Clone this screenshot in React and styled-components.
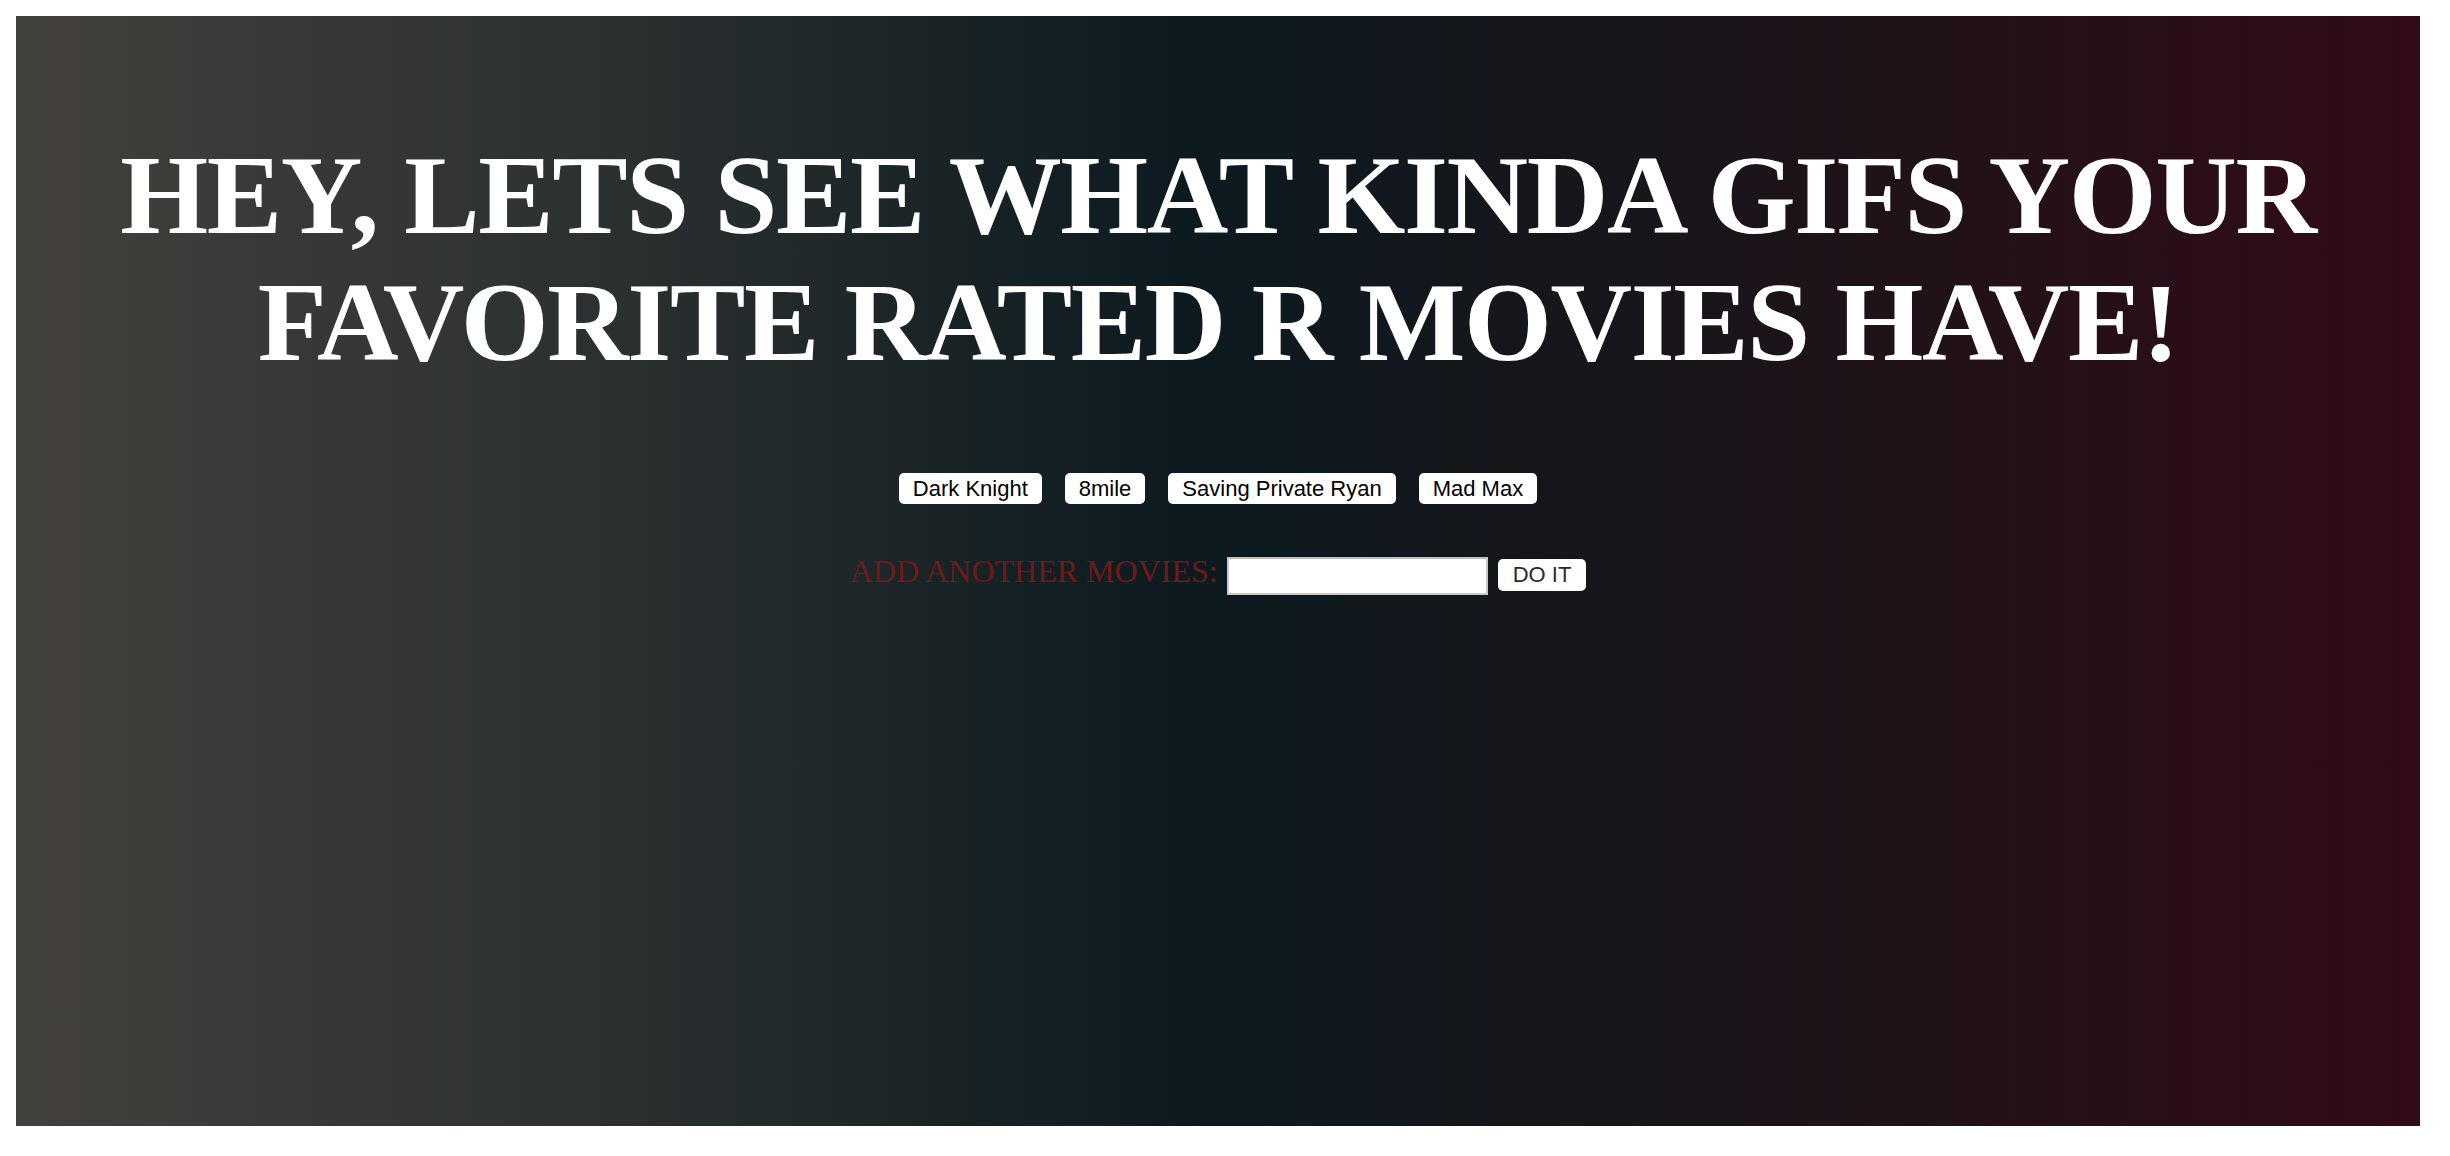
import React, { useState } from "react";
import styled, { createGlobalStyle } from "styled-components";

const GlobalStyle = createGlobalStyle`
    html, body {
        margin: 0;
        padding: 0;
        background-color: #ffffff;
    }
    body {
        padding: 16px 30px 30px 16px;
    }
`

export default function App(){
    const [movies, setMovies] = useState(["Dark Knight", "8mile", "Saving Private Ryan", "Mad Max"])
    const [newMovie, setNewMovie] = useState("")

    function addMovie(e){
        e.preventDefault()
        if(newMovie.trim() === '') return
        setMovies([...movies, newMovie.trim()])
        setNewMovie('')
    }

    return(
        <>
        <GlobalStyle />
        <Pagina>
            <Titulo>
                HEY, LETS SEE WHAT KINDA GIFS YOUR
                <br />
                FAVORITE RATED R MOVIES HAVE!
            </Titulo>

            <Botoes>
                {movies.map((m) => (
                    <MovieButton key={m}>{m}</MovieButton>
                ))}
            </Botoes>

            <Form onSubmit={addMovie}>
                <Label htmlFor="movie-input">ADD ANOTHER MOVIES:</Label>
                <Input
                    id="movie-input"
                    value={newMovie}
                    onChange={(e) => setNewMovie(e.target.value)}
                />
                <SubmitButton type="submit">DO IT</SubmitButton>
            </Form>
        </Pagina>
        </>
    )
}

const Pagina = styled.div`
    box-sizing: border-box;
    width: 2404px;
    height: 1110px;
    background: linear-gradient(to right, #42413d 0%, #2b3030 25%, #0c1a1f 49%, #1b141a 72%, #310b17 100%);
    display: flex;
    flex-direction: column;
    align-items: center;
    padding-top: 115px;
`
const Titulo = styled.h1`
    margin: 0;
    font-family: 'Liberation Serif', 'Times New Roman', serif;
    font-weight: 700;
    font-size: 113px;
    line-height: 127px;
    letter-spacing: -1.4px;
    color: #ffffff;
    text-align: center;
`
const Botoes = styled.div`
    display: flex;
    gap: 23px;
    margin-top: 88px;
`
const MovieButton = styled.button`
    box-sizing: border-box;
    height: 31px;
    padding: 0 14px;
    border: none;
    border-radius: 5px;
    background-color: #ffffff;
    color: #000000;
    font-family: 'Liberation Sans', Arial, sans-serif;
    font-size: 22px;
    line-height: 31px;
    cursor: pointer;
`
const Form = styled.form`
    display: flex;
    align-items: baseline;
    margin-top: 49px;
`
const Label = styled.label`
    font-family: 'Liberation Serif', 'Times New Roman', serif;
    font-size: 32px;
    color: #6e1a18;
    margin-right: 9px;
`
const Input = styled.input`
    box-sizing: border-box;
    width: 261px;
    height: 38px;
    border: 2px solid #c9c9c9;
    border-top-color: #bdbdbd;
    background-color: #ffffff;
    font-size: 20px;
    padding: 0 6px;
    outline: none;
`
const SubmitButton = styled.button`
    box-sizing: border-box;
    height: 32px;
    margin-left: 10px;
    padding: 0 15px;
    border: none;
    border-radius: 5px;
    background-color: #ffffff;
    color: #2b2b2b;
    font-family: 'Liberation Sans', Arial, sans-serif;
    font-size: 22px;
    line-height: 32px;
    cursor: pointer;
`
